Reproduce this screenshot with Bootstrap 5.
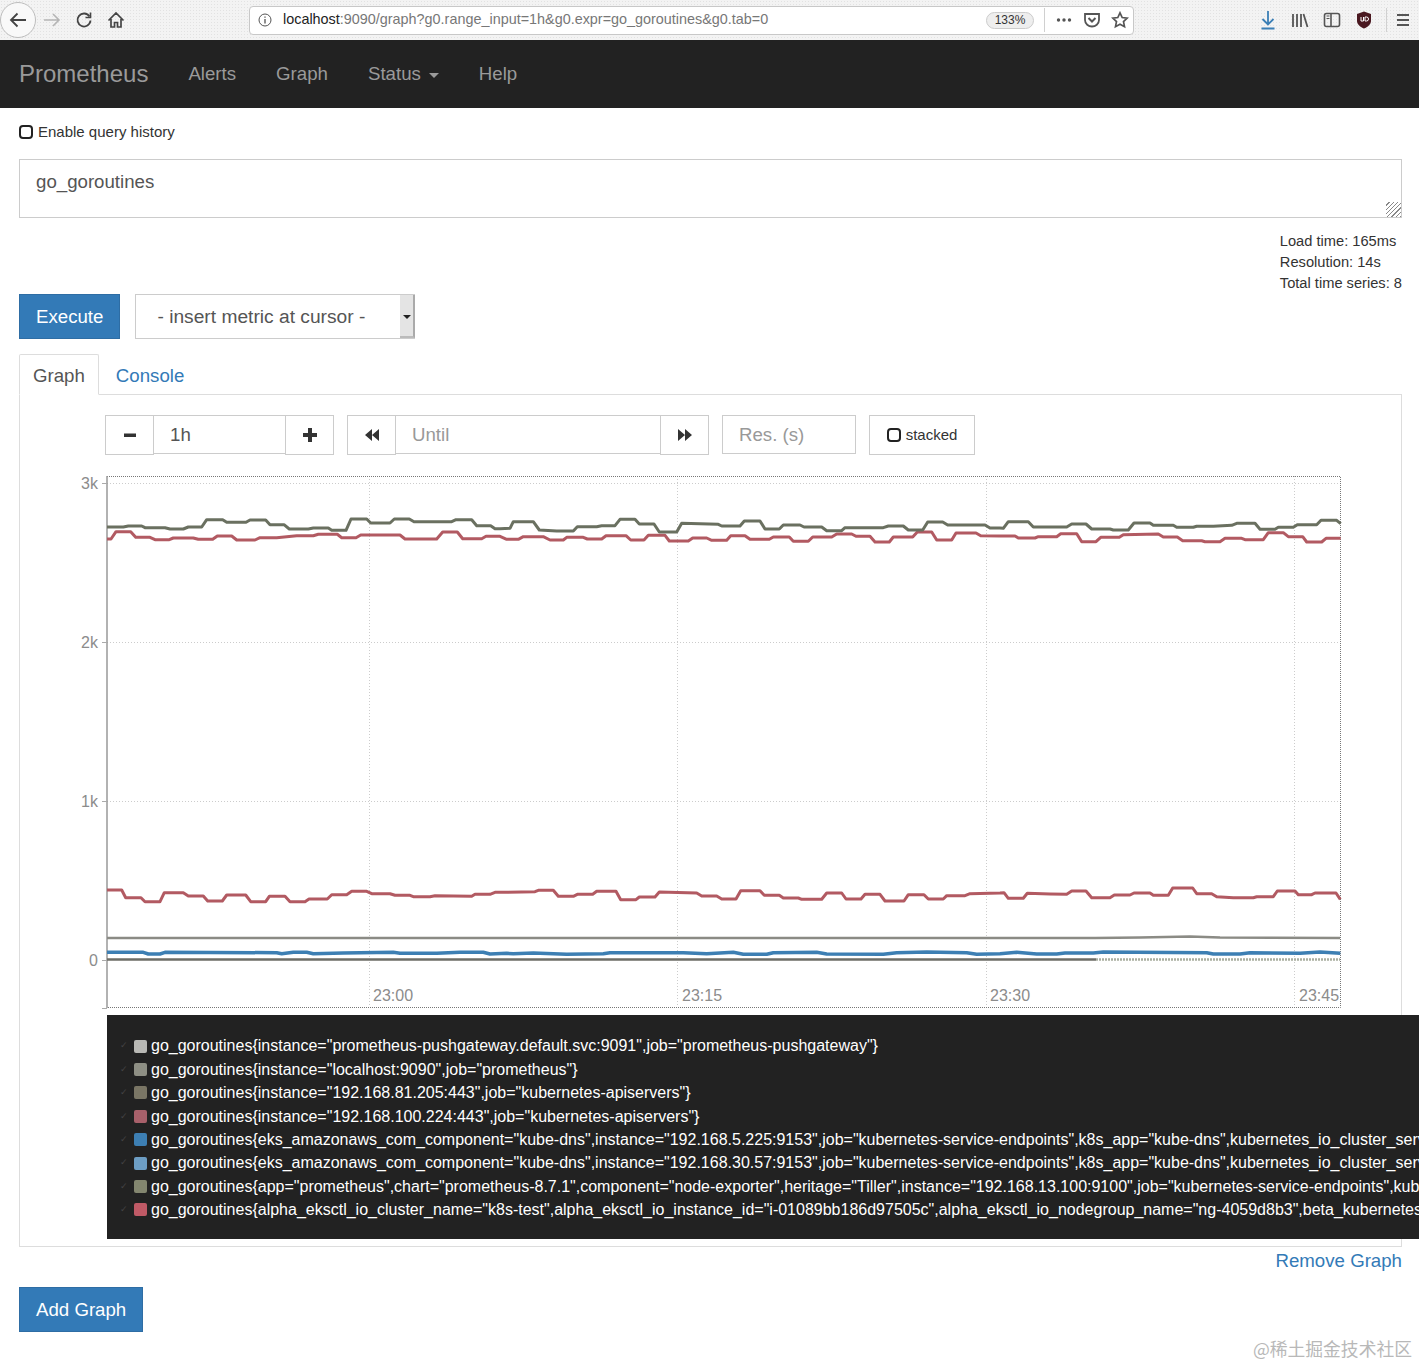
<!DOCTYPE html>
<html lang="en">
<head>
    <meta charset="UTF-8">
    <title>Prometheus Time Series Collection and Processing Server</title>
    <link href="https://cdn.jsdelivr.net/npm/bootstrap@5.3.3/dist/css/bootstrap.min.css" rel="stylesheet">
    <style>
        html, body {
            overflow-x: hidden;
        }

        body {
            background: #fff;
            color: #333;
            font-family: "Liberation Sans", Arial, sans-serif;
            font-size: 18.67px;
        }

        /* browser chrome */
        .ff-bar {
            height: 40px;
            background: #f3f3f3;
            background-image: radial-gradient(#e2e2e2 0.6px, transparent 0.7px);
            background-size: 3px 3px;
        }

        .ff-back {
            width: 36px;
            height: 36px;
            border: 1px solid #bdbdbd;
            border-radius: 50%;
            background: #f9f9f9;
        }

        .ff-btn {
            width: 32px;
            height: 32px;
        }

        .ff-addr {
            width: 885px;
            height: 29px;
            margin-left: 117px;
            padding: 0 4px 0 8px;
            background: #fff;
            border: 1px solid #c8c8c8;
            border-radius: 4px;
            font-size: 14.4px;
            color: #777;
        }

        .ff-url {
            margin-left: 11px;
        }

        .ff-host {
            color: #222;
        }

        .ff-zoom {
            width: 48px;
            height: 17px;
            line-height: 15px;
            text-align: center;
            font-size: 12px;
            color: #333;
            background: #eee;
            border: 1px solid #ccc;
            border-radius: 9px;
        }

        .ff-sep {
            width: 1px;
            height: 24px;
            background: #d0d0d0;
        }

        .ff-gap {
            margin-left: 10px;
        }

        .ff-sep-end {
            margin-left: 6px;
        }

        /* prometheus nav */
        .prom-nav {
            height: 68px;
            padding: 0 0 0 19px;
            background: #222;
        }

        .prom-nav .navbar-brand {
            margin: 0 20px 0 0;
            padding: 0;
            font-size: 24px;
            color: #9a9a9a;
        }

        .prom-nav .navbar-nav .nav-link {
            padding: 0 20px;
            font-size: 18.67px;
            color: #9a9a9a;
        }

        .prom-caret {
            display: inline-block;
            margin-left: 8px;
            vertical-align: middle;
            border-top: 5px solid #9a9a9a;
            border-left: 5px solid transparent;
            border-right: 5px solid transparent;
        }

        .page-wrap {
            padding: 0 17px 0 19px;
        }

        .history-row {
            height: 51px;
            padding-bottom: 2px;
            font-size: 15px;
            color: #333;
        }

        .history-row .box-check {
            margin-top: -2px;
        }

        .box-check {
            width: 14px;
            height: 14px;
            margin: 0 5px 0 0;
            border: 2px solid #222;
            border-radius: 4px;
            appearance: none;
            background: #fff;
        }

        .expr-input {
            height: 59px;
            padding: 8px 16px;
            border: 1px solid #ccc;
            border-radius: 0;
            font-size: 18.67px;
            color: #555;
        }

        .expr-input::-webkit-resizer {
            background: repeating-linear-gradient(135deg, transparent 0 2px, #888 2px 3px);
        }

        .eval-stats {
            margin-top: 13px;
            font-size: 14.67px;
            line-height: 21px;
            color: #333;
        }

        .btn-prom {
            height: 45px;
            padding: 0 16px;
            background: #337ab7;
            border: 1px solid #2e6da4;
            border-radius: 0;
            font-size: 18.67px;
            line-height: 43px;
            color: #fff;
        }

        .metric-wrap {
            width: 280px;
            height: 45px;
            margin-left: 15px;
        }

        .metric-select {
            width: 100%;
            height: 45px;
            padding: 2px 0 0 21px;
            background-image: none;
            border: 1px solid #ccc;
            border-radius: 0;
            font-size: 19.2px;
            color: #555;
        }

        .metric-arrow {
            position: absolute;
            top: 1px;
            right: 0;
            width: 15px;
            height: 43px;
            background: #e4e4e4;
            border-right: 2px solid #aaa;
            border-bottom: 2px solid #bbb;
        }

        .metric-arrow::after {
            content: "";
            position: absolute;
            top: 20px;
            left: 3px;
            border-top: 4px solid #222;
            border-left: 4px solid transparent;
            border-right: 4px solid transparent;
        }

        /* tabs and panel */
        .graph-tabs {
            margin-top: 15px;
            border-color: #ddd;
        }

        .graph-tabs .nav-link {
            height: 41px;
            margin-right: 3px;
            padding: 0 13px;
            font-size: 18.67px;
            line-height: 41px;
            color: #337ab7;
            border-radius: 2px 2px 0 0;
        }

        .graph-tabs .nav-link.active {
            color: #555;
            border-color: #ddd #ddd #fff;
        }

        .graph-panel {
            height: 852px;
            padding-top: 20px;
            border: 1px solid #ddd;
            border-top: 0;
        }

        .graph-controls {
            margin-left: 85px;
            height: 40px;
        }

        .ctl-btn {
            display: flex;
            align-items: center;
            justify-content: center;
            width: 49px;
            height: 40px;
            padding: 0;
            background: #fff;
            border: 1px solid #ccc;
            border-radius: 0;
        }

        .ctl-input {
            height: 39px;
            padding: 0 16px;
            border: 1px solid #ccc;
            border-left: 0;
            border-right: 0;
            border-radius: 0;
            font-size: 18.67px;
            color: #555;
        }

        .ctl-input::placeholder {
            color: #999;
        }

        .range-input {
            width: 131px;
        }

        .until-input {
            width: 264px;
        }

        .res-input {
            width: 134px;
            margin-left: 13px;
            border: 1px solid #ccc;
        }

        .time-group {
            margin-left: 13px;
        }

        .stacked-btn {
            width: 106px;
            height: 40px;
            margin-left: 13px;
            font-size: 15px;
            color: #333;
            background: #fff;
            border: 1px solid #ccc;
        }

        .chart-svg {
            display: block;
            margin: 15px 0 0 50px;
        }

        .chart-svg text {
            font-family: "Liberation Sans", Arial, sans-serif;
            font-size: 16px;
            fill: #8c8c8c;
        }

        .graph-legend {
            width: 1340px;
            height: 224px;
            margin: 5px 0 0 87px;
            padding: 19.3px 0 0 13px;
            background: #222;
            color: #fff;
            font-size: 16px;
            line-height: 23.4px;
            white-space: nowrap;
            overflow: hidden;
        }

        .legend-tick {
            flex: none;
            width: 14px;
            font-size: 9px;
            color: #444;
        }

        .legend-swatch {
            flex: none;
            width: 13px;
            height: 13px;
            margin-right: 4px;
            border-radius: 2px;
        }

        .legend-text {
            flex: none;
        }

        .remove-link {
            height: 40px;
            line-height: 28px;
            font-size: 18.67px;
            color: #337ab7;
            text-decoration: none;
        }

        .site-mark {
            margin: 4px -10px 0 0;
            font-family: "Noto Sans CJK SC", sans-serif;
            font-size: 17.8px;
            line-height: 24px;
            color: #b8b8b8;
        }
    </style>
</head>
<body>
    <!-- Browser toolbar -->
    <div class="ff-bar d-flex align-items-center">
        <div class="ff-back d-flex align-items-center justify-content-center flex-shrink-0">
            <svg width="20" height="20" viewBox="0 0 20 20" fill="none" stroke="#444" stroke-width="1.8"><path d="M18 10H3M9.5 3.5 3 10l6.500 6.500"/></svg>
        </div>
        <div class="ff-btn d-flex align-items-center justify-content-center">
            <svg width="20" height="20" viewBox="0 0 20 20" fill="none" stroke="#b5b5b5" stroke-width="1.6"><path d="M2 10h15M11 4l6 6-6 6"/></svg>
        </div>
        <div class="ff-btn d-flex align-items-center justify-content-center">
            <svg width="18" height="18" viewBox="0 0 18 18" fill="none" stroke="#444" stroke-width="1.8"><path d="M14.500 5.500A6.500 6.500 0 1 0 15.500 9.500"/><path d="M15.500 1.500v5h-5" stroke-width="1.600"/></svg>
        </div>
        <div class="ff-btn d-flex align-items-center justify-content-center">
            <svg width="18" height="18" viewBox="0 0 18 18" fill="none" stroke="#444" stroke-width="1.7"><path d="M1.500 9.500 9 2l7.500 7.500M4 8v8h3.500v-4.500h3V16H14V8"/></svg>
        </div>
        <div class="ff-addr d-flex align-items-center flex-shrink-0">
            <svg class="flex-shrink-0" width="14" height="14" viewBox="0 0 14 14" fill="none" stroke="#555"><circle cx="7" cy="7" r="6"/><path d="M7 6v4.500M7 3.500v1.300" stroke-width="1.300"/></svg>
            <span class="ff-url"><span class="ff-host">localhost</span>:9090/graph?g0.range_input=1h&amp;g0.expr=go_goroutines&amp;g0.tab=0</span>
            <span class="ff-zoom ms-auto">133%</span>
            <span class="ff-sep ff-gap"></span>
            <svg class="ff-gap" width="18" height="18" viewBox="0 0 18 18" fill="#555"><circle cx="3.500" cy="9" r="1.700"/><circle cx="9" cy="9" r="1.700"/><circle cx="14.500" cy="9" r="1.700"/></svg>
            <svg class="ff-gap" width="18" height="18" viewBox="0 0 18 18" fill="none" stroke="#555" stroke-width="1.800"><path d="M2 3h14v6c0 4-3.500 6.500-7 6.500S2 13 2 9z"/><path d="M5.500 7 9 10.500 12.500 7" stroke-width="2"/></svg>
            <svg class="ff-gap" width="18" height="18" viewBox="0 0 18 18" fill="none" stroke="#555" stroke-width="1.700"><path d="M9 1.800l2.200 4.700 5 .6-3.700 3.500 1 5.100L9 13.200l-4.500 2.500 1-5.100L1.800 7.100l5-.6z"/></svg>
        </div>
        <div class="d-flex align-items-center ms-auto">
            <div class="ff-btn d-flex align-items-center justify-content-center">
                <svg width="18" height="20" viewBox="0 0 18 20" fill="none" stroke="#3b7fb6" stroke-width="1.800"><path d="M9 1v13M3.500 9 9 14.500 14.500 9M2.500 18.500h13"/></svg>
            </div>
            <div class="ff-btn d-flex align-items-center justify-content-center">
                <svg width="18" height="18" viewBox="0 0 18 18" fill="none" stroke="#555" stroke-width="1.800"><path d="M2 3v13M6 3v13M10 3v13M12.500 3 16.500 16"/></svg>
            </div>
            <div class="ff-btn d-flex align-items-center justify-content-center">
                <svg width="18" height="18" viewBox="0 0 18 18" fill="none" stroke="#555" stroke-width="1.600"><rect x="1.500" y="2.500" width="15" height="13" rx="2"/><path d="M8 2.500v13"/><path d="M3.500 5h3M3.500 7.500h3" stroke-width="1.200"/></svg>
            </div>
            <div class="ff-btn d-flex align-items-center justify-content-center">
                <svg width="16" height="18" viewBox="0 0 16 18"><path d="M8 .5 15 3v7c0 3.500-3.500 6-7 7.500C4.500 16 1 13.500 1 10V3z" fill="#4a1820"/><path d="M5 6v4h2.500V6M9 6v4h1.500a2 2 0 0 0 0-4z" fill="none" stroke="#fff" stroke-width="1"/></svg>
            </div>
            <span class="ff-sep ff-sep-end"></span>
            <div class="ff-btn d-flex align-items-center justify-content-center">
                <svg width="16" height="16" viewBox="0 0 16 16" stroke="#555" stroke-width="2"><path d="M2 3h12M2 8h12M2 13h12"/></svg>
            </div>
        </div>
    </div>

    <!-- Navbar -->
    <nav class="navbar navbar-expand prom-nav">
        <a class="navbar-brand" href="#">Prometheus</a>
        <ul class="navbar-nav">
            <li class="nav-item"><a class="nav-link" href="#">Alerts</a></li>
            <li class="nav-item"><a class="nav-link" href="#">Graph</a></li>
            <li class="nav-item"><a class="nav-link" href="#">Status<span class="prom-caret"></span></a></li>
            <li class="nav-item"><a class="nav-link" href="#">Help</a></li>
        </ul>
    </nav>

    <div class="page-wrap">
        <div class="history-row d-flex align-items-center">
            <input class="box-check" type="checkbox" id="history">
            <label for="history">Enable query history</label>
        </div>

        <textarea class="form-control expr-input">go_goroutines</textarea>

        <div class="d-flex justify-content-end">
            <div class="eval-stats">
                Load time: 165ms<br>
                Resolution: 14s<br>
                Total time series: 8
            </div>
        </div>

        <div class="d-flex align-items-start">
            <button class="btn btn-prom">Execute</button>
            <div class="metric-wrap position-relative">
                <select class="form-select metric-select">
                    <option>- insert metric at cursor -</option>
                </select>
                <span class="metric-arrow"></span>
            </div>
        </div>

        <ul class="nav nav-tabs graph-tabs">
            <li class="nav-item"><a class="nav-link active" href="#">Graph</a></li>
            <li class="nav-item"><a class="nav-link" href="#">Console</a></li>
        </ul>

        <div class="graph-panel">
            <div class="graph-controls d-flex align-items-start">
                <div class="d-flex align-items-start">
                    <button class="ctl-btn"><svg width="14" height="14" viewBox="0 0 14 14"><rect x="1" y="5.500" width="12" height="3.500" fill="#333"/></svg></button>
                    <input class="form-control ctl-input range-input" value="1h">
                    <button class="ctl-btn"><svg width="16" height="16" viewBox="0 0 16 16" fill="#333"><path d="M6 1h4v5h5v4h-5v5H6v-5H1V6h5z"/></svg></button>
                </div>
                <div class="d-flex align-items-start time-group">
                    <button class="ctl-btn"><svg width="16" height="14" viewBox="0 0 16 14" fill="#333"><path d="M8 1v12L1 7zM15 1v12L8 7z"/></svg></button>
                    <input class="form-control ctl-input until-input" placeholder="Until">
                    <button class="ctl-btn"><svg width="16" height="14" viewBox="0 0 16 14" fill="#333"><path d="M1 1v12l7-6zM8 1v12l7-6z"/></svg></button>
                </div>
                <input class="form-control ctl-input res-input" placeholder="Res. (s)">
                <button class="btn stacked-btn p-0 d-flex align-items-center justify-content-center rounded-0">
                    <span class="box-check d-inline-block"></span>stacked
                </button>
            </div>

            <svg class="chart-svg" width="1290" height="540" viewBox="70 470 1290 540">
                <g stroke="#ccc" stroke-dasharray="1 2" fill="none">
                    <path d="M107 483.500H1340M107 642.500H1340M107 801.500H1340"/>
                    <path d="M369.500 476V1007M677.500 476V1007M986.500 476V1007M1294.500 476V1007"/>
                </g>
                <path d="M107 476.500H1340.500V1007.500H107" fill="none" stroke="#777" stroke-dasharray="1 1"/>
                <path d="M107 476V1008" stroke="#999" stroke-width="1.500"/>
                <path d="M102 483.500h5M102 642.500h5M102 801.500h5M102 960.500h5M102 1008.500h5" stroke="#aaa"/>
                <g text-anchor="end">
                    <text x="98" y="489">3k</text>
                    <text x="98" y="648">2k</text>
                    <text x="98" y="807">1k</text>
                    <text x="98" y="966">0</text>
                </g>
                <text x="373" y="1001">23:00</text>
                <text x="682" y="1001">23:15</text>
                <text x="990" y="1001">23:30</text>
                <text x="1299" y="1001">23:45</text>
                <g id="series" fill="none" stroke-linejoin="round"></g>
            </svg>

            <div class="graph-legend" id="legend"></div>
        </div>

        <div class="d-flex justify-content-end">
            <a class="remove-link" href="#">Remove Graph</a>
        </div>

        <button class="btn btn-prom">Add Graph</button>
        <div class="site-mark text-end">@稀土掘金技术社区</div>
    </div>

    <script>
        // traced series, each chunk is [baseX, baseY, x1, y1, x2, y2...] at 3x
        const traces = {
            top: [
                [100, 505, 21,66,70,66,85,63,125,63,135,68,195,68,210,72,250,72,265,66,305,66,320,44,368,44,380,52,438,52,450,45,497,45,510,59,552,59,568,72,625,72,640,69,685,69,695,76,738,76,753,42,800,42,812,54,870,54,883,42,928,42,942,50,1055,50,1068,44,1115,44,1130,62,1172,62,1185,71,1200,71],
                [500, 400, 30,385,40,365,100,365,118,390,170,393,220,393,232,380,290,380,305,377,345,377,360,358,405,358,418,372,462,372,478,396,530,396,545,370,655,373,665,378,720,378,733,363,780,363,795,387,838,387,850,375,900,375,912,381,965,381,980,392,1025,392,1035,383,1150,383,1165,378,1210,378,1225,390,1268,390,1283,366,1328,366,1343,375,1455,375,1470,384,1500,384],
                [1000, 505, 10,70,25,50,85,50,100,66,200,66,215,57,258,57,275,72,330,72,340,75,385,75,402,54,450,54,460,61,520,61,530,67,580,67,590,64,640,64,695,61,710,55,765,55,780,73,825,73,835,67,880,67,892,59,950,59,963,46,1010,46,1022,56]
            ],
            red: [
                [100, 505, 21,102,33,102,48,80,92,80,107,97,150,97,165,104,208,104,220,99,280,99,295,103,338,103,352,93,395,93,410,105,465,105,480,98,530,98,590,92,640,92,655,88,712,88,725,98,768,98,782,90,900,90,915,102,1010,102,1028,81,1072,81,1088,101,1145,101,1158,94,1200,94],
                [500, 400, 20,418,55,418,70,410,130,410,150,420,190,420,200,412,250,412,262,417,305,417,318,407,378,407,392,420,432,420,445,406,495,406,508,423,565,423,578,414,620,414,635,421,680,421,692,407,735,407,750,418,808,418,820,411,868,411,880,424,925,424,938,411,995,411,1010,402,1055,402,1068,409,1110,409,1125,426,1168,426,1180,411,1238,411,1252,396,1295,396,1310,420,1355,420,1368,399,1428,399,1442,407,1500,408],
                [1000, 505, 45,93,55,99,105,99,115,95,170,95,182,86,230,86,245,110,288,110,302,97,358,97,370,89,475,87,490,96,532,96,548,107,605,107,615,110,660,110,675,100,725,100,735,104,790,104,805,83,850,83,865,95,908,95,920,111,965,111,978,100,1022,100]
            ],
            low: [
                [60, 870, 141,60,185,60,197,83,243,83,255,95,300,95,313,68,370,68,385,78,430,78,443,93,487,93,500,75,557,75,572,95,617,95,628,79,675,79,690,95,735,95,747,87,802,87,815,74,860,74,875,64,920,64,935,71,990,71,1005,76,1050,76,1060,80,1110,80,1125,77,1235,79,1245,73,1290,73,1305,67],
                [500, 875, 0,52,105,50,115,46,160,46,175,64,220,64,232,58,278,58,290,49,348,49,362,74,408,74,418,66,465,66,478,51,590,54,605,63,650,63,665,72,708,72,722,47,780,47,793,61,838,61,850,69,895,69,905,73,965,73,980,54,1025,54,1038,72,1083,72,1095,58,1140,58,1155,78,1212,78,1225,59,1272,59,1285,72,1330,72,1340,62,1395,62,1410,56,1500,54],
                [1000, 880, 12,38,25,55,70,55,82,40,150,42,200,43,215,33,258,33,275,53,330,53,343,45,390,45,402,39,450,39,460,46,505,46,518,24,578,24,590,41,635,41,650,50,700,53,760,53,770,50,820,50,832,33,885,33,895,44,935,44,945,39,1008,39,1021,58]
            ],
            blue: [
                [60, 870, 141,247,250,247,265,252,300,252,315,247,650,248,665,251,700,247,740,247,760,251,850,249,1000,247,1020,250,1130,250,1200,247,1270,247,1290,252,1340,250],
                [500, 875, 40,236,100,234,200,238,310,236,330,233,550,233,620,236,700,232,730,238,800,238,820,233,950,232,980,237,1150,238,1190,233,1280,231,1400,233,1430,238,1500,236],
                [1000, 880, 50,217,110,222,170,222,195,219,280,219,310,216,620,218,640,222,720,222,750,218,900,220,960,216,1021,220]
            ]
        };

        function toPoints(chunks) {
            const pts = [];
            chunks.forEach(chunk => {
                for (let i = 2; i < chunk.length; i += 2) {
                    pts.push((chunk[0] + chunk[i] / 3).toFixed(1) + ',' + (chunk[1] + chunk[i + 1] / 3).toFixed(1));
                }
            });
            return pts.join(' ');
        }

        const seriesEl = document.getElementById('series');

        function addLine(points, stroke, width, dash) {
            const line = document.createElementNS('http://www.w3.org/2000/svg', 'polyline');
            line.setAttribute('points', points);
            line.setAttribute('stroke', stroke);
            line.setAttribute('stroke-width', width);
            if (dash) line.setAttribute('stroke-dasharray', dash);
            seriesEl.appendChild(line);
        }

        // the flat ones
        addLine('107,938 1095,938 1140,937.500 1190,936.500 1220,937.500 1340,938', '#8b8b85', 2.500);
        addLine('107,959.500 1096,959.500', '#6d6d66', 2.500);
        addLine('1096,959.500 1340,959.500', '#a9aea0', 2.500, '2 1');
        addLine(toPoints(traces.blue), '#3d7fb3', 3.500);
        addLine(toPoints(traces.low), '#b25a62', 3);
        addLine(toPoints(traces.red), '#b25a62', 3);
        addLine(toPoints(traces.top), '#6a7060', 3);

        const legendRows = [
            ['#b9b9b5', 'go_goroutines{instance="prometheus-pushgateway.default.svc:9091",job="prometheus-pushgateway"}'],
            ['#8e8f84', 'go_goroutines{instance="localhost:9090",job="prometheus"}'],
            ['#7a7665', 'go_goroutines{instance="192.168.81.205:443",job="kubernetes-apiservers"}'],
            ['#a8606a', 'go_goroutines{instance="192.168.100.224:443",job="kubernetes-apiservers"}'],
            ['#3d7fb3', 'go_goroutines{eks_amazonaws_com_component="kube-dns",instance="192.168.5.225:9153",job="kubernetes-service-endpoints",k8s_app="kube-dns",kubernetes_io_cluster_service="true"}'],
            ['#6d9ec4', 'go_goroutines{eks_amazonaws_com_component="kube-dns",instance="192.168.30.57:9153",job="kubernetes-service-endpoints",k8s_app="kube-dns",kubernetes_io_cluster_service="true"}'],
            ['#83866f', 'go_goroutines{app="prometheus",chart="prometheus-8.7.1",component="node-exporter",heritage="Tiller",instance="192.168.13.100:9100",job="kubernetes-service-endpoints",kubernetes_node="ip"}'],
            ['#c05a66', 'go_goroutines{alpha_eksctl_io_cluster_name="k8s-test",alpha_eksctl_io_instance_id="i-01089bb186d97505c",alpha_eksctl_io_nodegroup_name="ng-4059d8b3",beta_kubernetes_io_arch="amd64"}']
        ];

        const legend = document.getElementById('legend');
        legendRows.forEach(row => {
            const div = document.createElement('div');
            div.className = 'd-flex align-items-center';
            div.innerHTML = '<span class="legend-tick">✓</span><span class="legend-swatch" style="background:' + row[0] + '"></span><span class="legend-text"></span>';
            div.lastChild.textContent = row[1];
            legend.appendChild(div);
        });
    </script>
    <script src="https://cdn.jsdelivr.net/npm/bootstrap@5.3.3/dist/js/bootstrap.bundle.min.js"></script>
</body>
</html>
